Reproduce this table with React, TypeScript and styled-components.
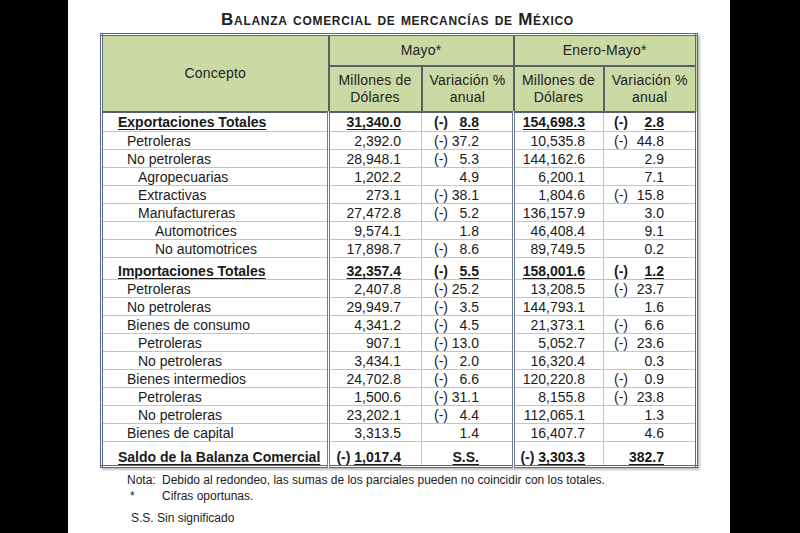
import styled, { createGlobalStyle } from 'styled-components';

const GlobalStyle = createGlobalStyle`
  body {
    margin: 0;
    background: #000;
    font-family: "Liberation Sans", Arial, sans-serif;
  }
`;

type Val = { s?: string; v: string };

type Row = {
  label: string;
  level: number;
  total?: boolean;
  m: Val;
  mv: Val;
  e: Val;
  ev: Val;
};

const n = (v: string, s = ''): Val => ({ v, s });

const rows: Row[] = [
  { label: 'Exportaciones Totales', level: 0, total: true, m: n('31,340.0'), mv: n('8.8', '(-)'), e: n('154,698.3'), ev: n('2.8', '(-)') },
  { label: 'Petroleras', level: 1, m: n('2,392.0'), mv: n('37.2', '(-)'), e: n('10,535.8'), ev: n('44.8', '(-)') },
  { label: 'No petroleras', level: 1, m: n('28,948.1'), mv: n('5.3', '(-)'), e: n('144,162.6'), ev: n('2.9') },
  { label: 'Agropecuarias', level: 2, m: n('1,202.2'), mv: n('4.9'), e: n('6,200.1'), ev: n('7.1') },
  { label: 'Extractivas', level: 2, m: n('273.1'), mv: n('38.1', '(-)'), e: n('1,804.6'), ev: n('15.8', '(-)') },
  { label: 'Manufactureras', level: 2, m: n('27,472.8'), mv: n('5.2', '(-)'), e: n('136,157.9'), ev: n('3.0') },
  { label: 'Automotrices', level: 3, m: n('9,574.1'), mv: n('1.8'), e: n('46,408.4'), ev: n('9.1') },
  { label: 'No automotrices', level: 3, m: n('17,898.7'), mv: n('8.6', '(-)'), e: n('89,749.5'), ev: n('0.2') },
  { label: 'Importaciones Totales', level: 0, total: true, m: n('32,357.4'), mv: n('5.5', '(-)'), e: n('158,001.6'), ev: n('1.2', '(-)') },
  { label: 'Petroleras', level: 1, m: n('2,407.8'), mv: n('25.2', '(-)'), e: n('13,208.5'), ev: n('23.7', '(-)') },
  { label: 'No petroleras', level: 1, m: n('29,949.7'), mv: n('3.5', '(-)'), e: n('144,793.1'), ev: n('1.6') },
  { label: 'Bienes de consumo', level: 1, m: n('4,341.2'), mv: n('4.5', '(-)'), e: n('21,373.1'), ev: n('6.6', '(-)') },
  { label: 'Petroleras', level: 2, m: n('907.1'), mv: n('13.0', '(-)'), e: n('5,052.7'), ev: n('23.6', '(-)') },
  { label: 'No petroleras', level: 2, m: n('3,434.1'), mv: n('2.0', '(-)'), e: n('16,320.4'), ev: n('0.3') },
  { label: 'Bienes intermedios', level: 1, m: n('24,702.8'), mv: n('6.6', '(-)'), e: n('120,220.8'), ev: n('0.9', '(-)') },
  { label: 'Petroleras', level: 2, m: n('1,500.6'), mv: n('31.1', '(-)'), e: n('8,155.8'), ev: n('23.8', '(-)') },
  { label: 'No petroleras', level: 2, m: n('23,202.1'), mv: n('4.4', '(-)'), e: n('112,065.1'), ev: n('1.3') },
  { label: 'Bienes de capital', level: 1, m: n('3,313.5'), mv: n('1.4'), e: n('16,407.7'), ev: n('4.6') },
  { label: 'Saldo de la Balanza Comercial', level: 0, total: true, m: n('1,017.4', '(-)'), mv: n('S.S.'), e: n('3,303.3', '(-)'), ev: n('382.7') },
];

const indent = [15, 24, 35, 52];

const Page = styled.div`
  width: 662px;
  height: 533px;
  margin-left: 68px;
  padding: 10px 0 0 32px;
  box-sizing: border-box;
  background: #fff;
  overflow: hidden;
  color: #1a1a1a;
`;

const Title = styled.h1`
  width: 595px;
  margin: 0 0 3px;
  text-align: center;
  font-size: 17px;
  line-height: 20px;
  letter-spacing: 0.7px;
  font-weight: bold;
  font-variant: small-caps;
  color: #222;
`;

const Table = styled.table`
  width: 595px;
  table-layout: fixed;
  border-collapse: collapse;
  border: 3px double #55688a;
  box-shadow: 2px 2px 2px rgba(0, 0, 0, 0.25);
  font-size: 14px;
`;

const Head = styled.th<{ $h?: number }>`
  height: ${(p) => p.$h ?? 30}px;
  padding: 0;
  background: #cbdaa5;
  border: 2px solid #56606e;
  font-weight: normal;
  font-size: 14px;
  line-height: 17px;
  letter-spacing: 0.2px;
  text-align: center;
  vertical-align: middle;
  color: #222;
`;

const Cell = styled.td<{ $pl?: number; $pr?: number; $low?: boolean; $sep?: boolean; $h: number; $align?: string }>`
  height: ${(p) => p.$h}px;
  padding: 0 ${(p) => p.$pr ?? 0}px 0 ${(p) => p.$pl ?? 0}px;
  border: 1px solid #c4c4c4;
  ${(p) => (p.$sep ? 'border-left: 3px double #6b7d99;' : '')}
  text-align: ${(p) => p.$align ?? 'left'};
  line-height: 16px;
  vertical-align: ${(p) => (p.$low ? 'bottom' : 'middle')};
  white-space: nowrap;
`;

const Split = styled.div`
  display: flex;
  justify-content: space-between;
`;

const Strong = styled.span<{ $b?: boolean; $u?: boolean }>`
  font-weight: ${(p) => (p.$b ? 'bold' : 'normal')};
  text-decoration: ${(p) => (p.$u ? 'underline' : 'none')};
  text-underline-offset: 2px;
`;

const Notes = styled.div`
  margin: 4px 0 0 27px;
  font-size: 12px;
  line-height: 16px;
  color: #222;
`;

const NoteRow = styled.div<{ $gap?: number; $top?: number }>`
  display: grid;
  grid-template-columns: ${(p) => p.$gap ?? 35}px auto;
  margin-top: ${(p) => p.$top ?? 0}px;
`;

const NoteMark = styled.span<{ $pl?: number }>`
  padding-left: ${(p) => p.$pl ?? 0}px;
`;

const Amount = ({ val, total }: { val: Val; total?: boolean }) => (
  <>
    {val.s && <Strong $b={total}>{val.s} </Strong>}
    <Strong $b={total} $u={total}>{val.v}</Strong>
  </>
);

const Variation = ({ val, total }: { val: Val; total?: boolean }) => (
  <Split>
    <Strong $b={total}>{val.s}</Strong>
    <Strong $b={total} $u={total}>{val.v}</Strong>
  </Split>
);

export default function App() {
  return (
    <>
      <GlobalStyle />
      <Page>
        <Title>Balanza comercial de mercancías de México</Title>
        <Table>
          <colgroup>
            <col style={{ width: 227 }} />
            <col style={{ width: 93 }} />
            <col style={{ width: 92 }} />
            <col style={{ width: 90 }} />
            <col style={{ width: 93 }} />
          </colgroup>
          <thead>
            <tr>
              <Head rowSpan={2}>Concepto</Head>
              <Head colSpan={2} $h={29}>Mayo*</Head>
              <Head colSpan={2} $h={29}>Enero-Mayo*</Head>
            </tr>
            <tr>
              <Head $h={44}>Millones de<br />Dólares</Head>
              <Head $h={44}>Variación %<br />anual</Head>
              <Head $h={44}>Millones de<br />Dólares</Head>
              <Head $h={44}>Variación %<br />anual</Head>
            </tr>
          </thead>
          <tbody>
            {rows.map((r, i) => {
              const last = i === rows.length - 1;
              const low = !!r.total && i > 0;
              const h = r.total ? (i === 0 ? 18 : last ? 23 : 21) : 17;
              return (
                <tr key={i}>
                  <Cell $h={h} $low={low} $pl={indent[r.level]}>
                    <Strong $b={r.total} $u={r.total}>{r.label}</Strong>
                  </Cell>
                  <Cell $h={h} $low={low} $sep $align="right" $pr={20}>
                    <Amount val={r.m} total={r.total} />
                  </Cell>
                  <Cell $h={h} $low={low} $pl={12} $pr={33} $align="right">
                    {last ? <Amount val={r.mv} total /> : <Variation val={r.mv} total={r.total} />}
                  </Cell>
                  <Cell $h={h} $low={low} $sep $align="right" $pr={18}>
                    <Amount val={r.e} total={r.total} />
                  </Cell>
                  <Cell $h={h} $low={low} $pl={10} $pr={31} $align="right">
                    {last ? <Amount val={r.ev} total /> : <Variation val={r.ev} total={r.total} />}
                  </Cell>
                </tr>
              );
            })}
          </tbody>
        </Table>
        <Notes>
          <NoteRow>
            <span>Nota:</span>
            <span>Debido al redondeo, las sumas de los parciales pueden no coincidir con los totales.</span>
          </NoteRow>
          <NoteRow>
            <NoteMark $pl={3}>*</NoteMark>
            <span>Cifras oportunas.</span>
          </NoteRow>
          <NoteRow $gap={30} $top={6}>
            <NoteMark $pl={4}>S.S.</NoteMark>
            <span>Sin significado</span>
          </NoteRow>
        </Notes>
      </Page>
    </>
  );
}
